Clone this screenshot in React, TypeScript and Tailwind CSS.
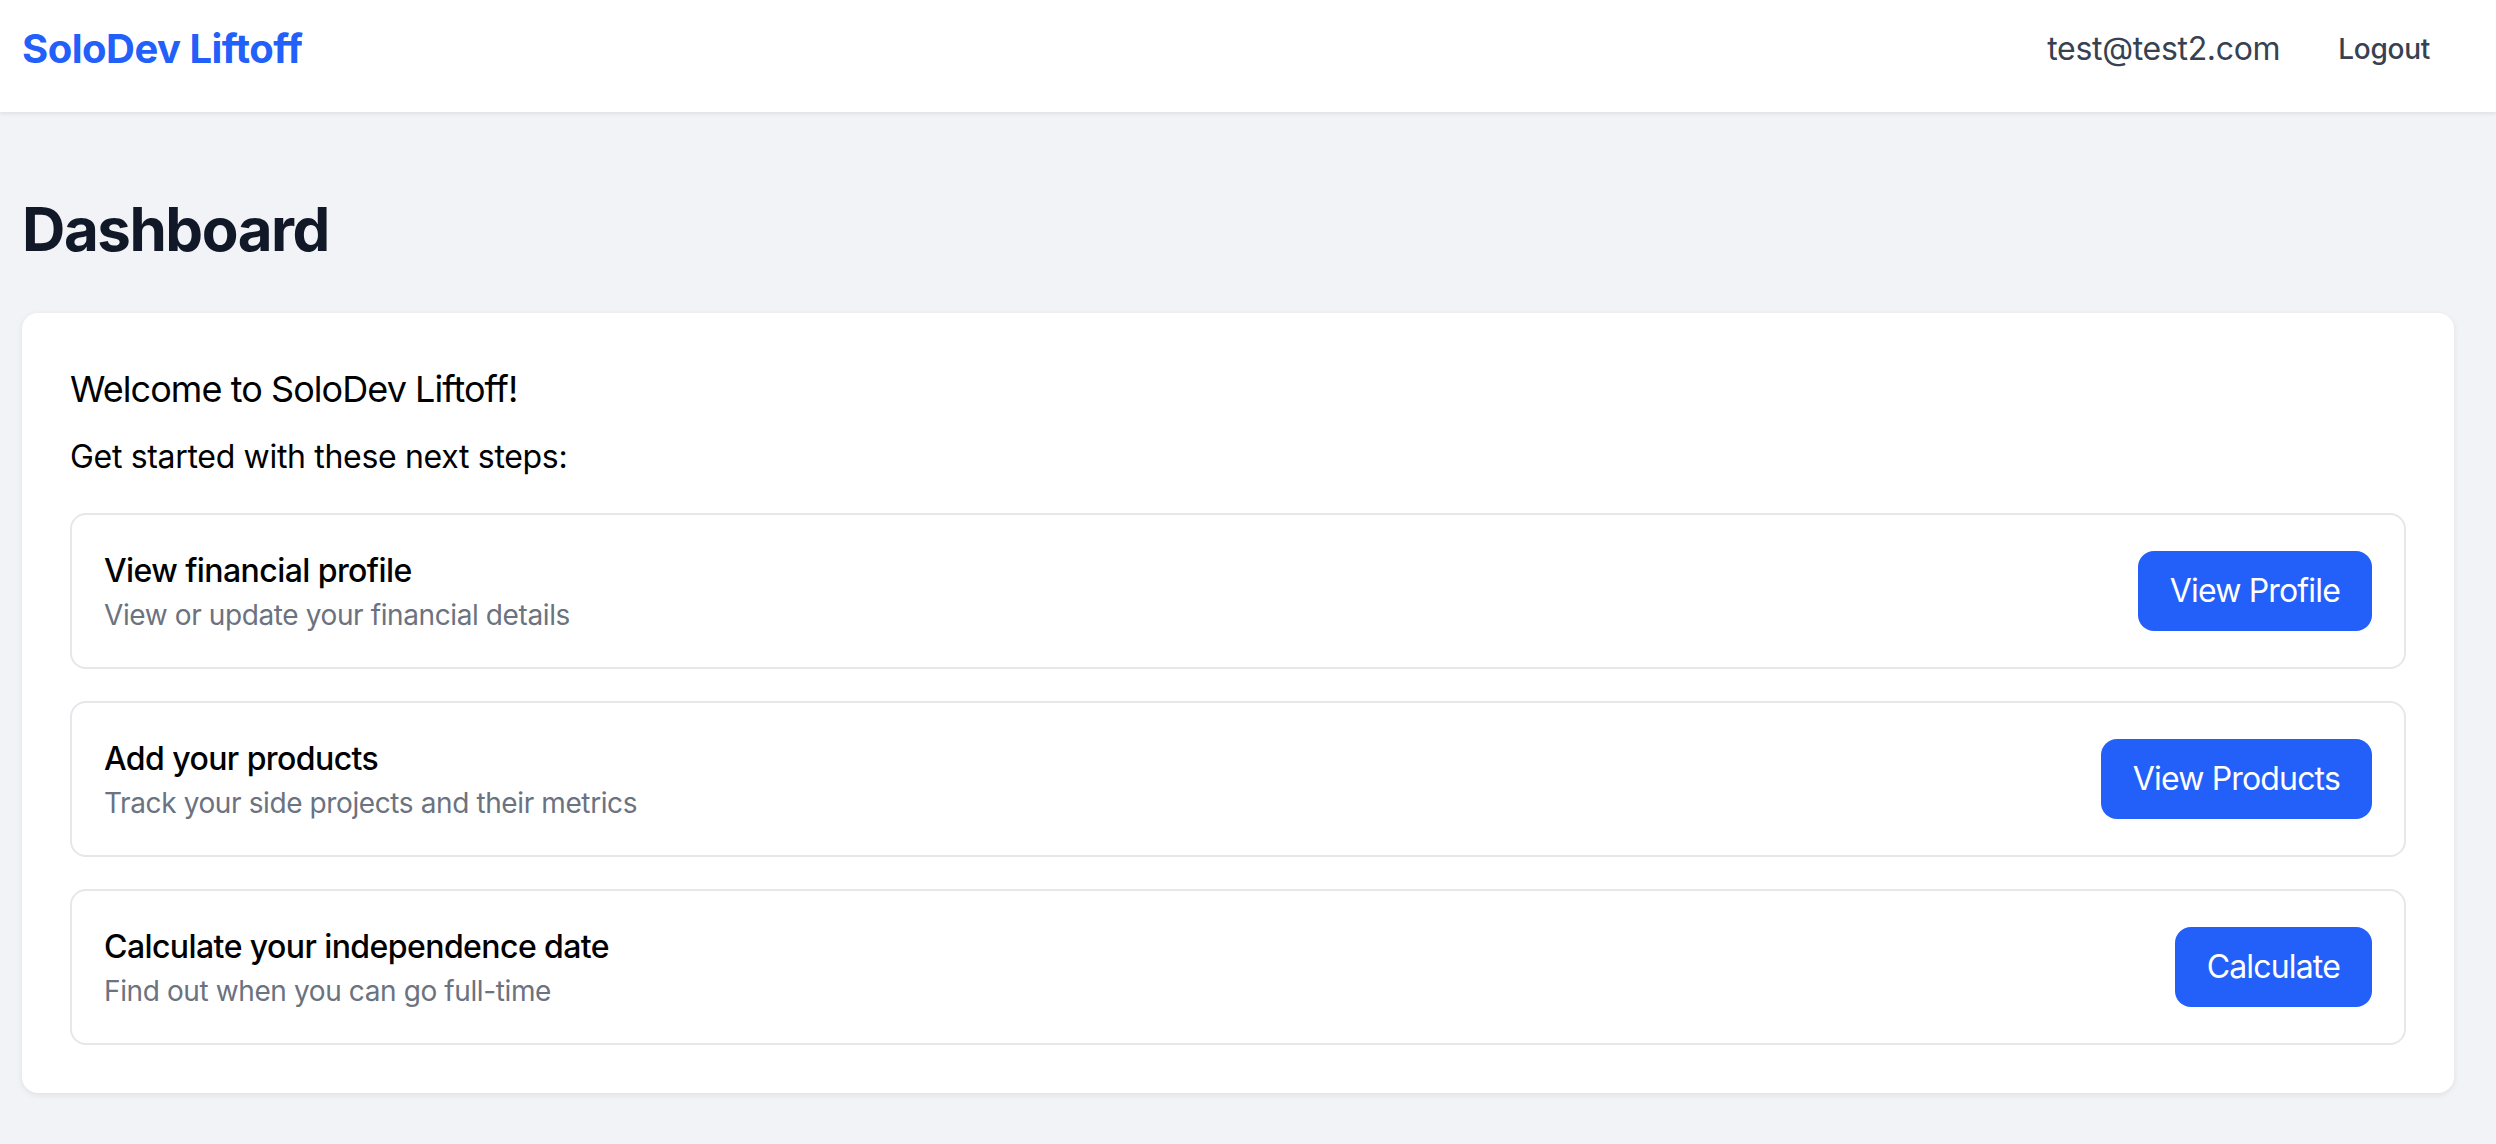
const steps = [
  {
    title: 'View financial profile',
    description: 'View or update your financial details',
    action: 'View Profile',
  },
  {
    title: 'Add your products',
    description: 'Track your side projects and their metrics',
    action: 'View Products',
  },
  {
    title: 'Calculate your independence date',
    description: 'Find out when you can go full-time',
    action: 'Calculate',
  },
]

export default function App() {
  return (
    <div className="min-h-screen bg-[#f2f3f6] font-['Inter','Liberation_Sans',sans-serif] tracking-[-0.02em] text-black">
      {/* Header */}
      <header className="flex h-[112px] items-center justify-between bg-white pb-[14px] pl-[22px] pr-[34px] shadow-[0_2px_4px_rgba(0,0,0,0.08)]">
        <span className="text-[40px] font-bold leading-[56px] tracking-[-0.013em] text-[#2360fa]">SoloDev Liftoff</span>
        <div className="flex items-center gap-[26px]">
          <span className="text-[32px] leading-[48px] text-[#374151]">test@test2.com</span>
          <button className="px-8 text-[28px] font-medium leading-[40px] tracking-[-0.01em] text-[#374151]">Logout</button>
        </div>
      </header>

      {/* Main */}
      <main className="pl-[22px] pr-[42px] pt-[81px] pb-12">
        <h1 className="mb-12 text-[60px] font-bold leading-[72px] tracking-[-0.024em] text-[#111827]">Dashboard</h1>

        <div className="rounded-2xl bg-white p-12 shadow-[0_2px_6px_rgba(0,0,0,0.08)]">
          <p className="mb-4 text-[36px] leading-[56px] tracking-[-0.026em]">Welcome to SoloDev Liftoff!</p>
          <p className="mb-8 text-[32px] leading-[48px]">Get started with these next steps:</p>

          <div className="flex flex-col gap-8">
            {steps.map((step) => (
              <div
                key={step.title}
                className="flex items-center justify-between rounded-2xl border-2 border-[#e5e7eb] p-8"
              >
                <div>
                  <h3 className="text-[32px] font-medium leading-[48px] tracking-[-0.018em]">{step.title}</h3>
                  <p className="text-[28px] leading-[40px] tracking-[-0.014em] text-[#6b7280]">{step.description}</p>
                </div>
                <button className="rounded-2xl bg-[#2360fa] px-8 py-4 text-[32px] leading-[48px] tracking-[-0.026em] text-white">
                  {step.action}
                </button>
              </div>
            ))}
          </div>
        </div>
      </main>
    </div>
  )
}
